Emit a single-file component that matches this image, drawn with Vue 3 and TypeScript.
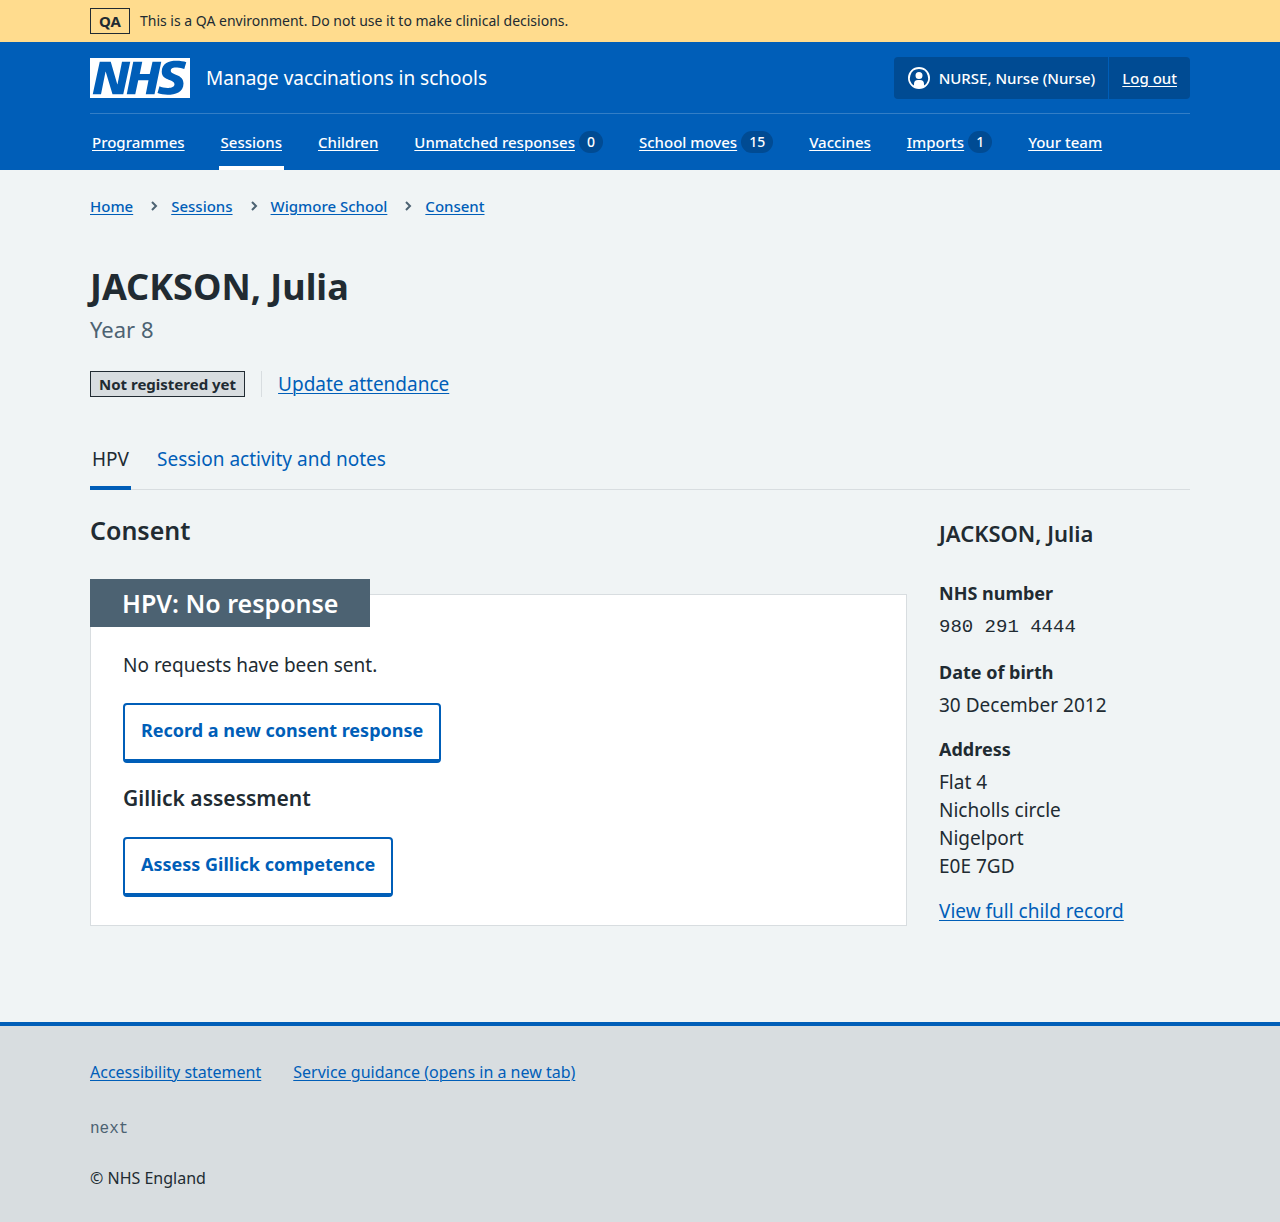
<script setup lang="ts">
interface NavItem {
  label: string
  count?: number
  current?: boolean
}

const navItems: NavItem[] = [
  { label: 'Programmes' },
  { label: 'Sessions', current: true },
  { label: 'Children' },
  { label: 'Unmatched responses', count: 0 },
  { label: 'School moves', count: 15 },
  { label: 'Vaccines' },
  { label: 'Imports', count: 1 },
  { label: 'Your team' },
]

const breadcrumbs: string[] = ['Home', 'Sessions', 'Wigmore School', 'Consent']

const address: string[] = ['Flat 4', 'Nicholls circle', 'Nigelport', 'E0E 7GD']
</script>

<template>
  <div class="page">
    <div class="environment">
      <div class="container environment-inner">
        <strong class="tag">QA</strong>
        <span class="environment-text">This is a QA environment. Do not use it to make clinical decisions.</span>
      </div>
    </div>

    <header class="header">
      <div class="container">
        <div class="header-top">
          <a class="service" href="#">
            <svg class="logo" viewBox="0 0 200 80" role="img" aria-label="NHS">
              <path
                fill="#fff"
                d="M200 0v80H0V0h200Zm-27.5 5.5c-14.5 0-29 5-29 22 0 10.2 7.7 13.5 14.7 16.3l.7.3c5.4 2 10.1 3.9 10.1 8.4 0 6.5-8.5 7.5-14 7.5s-12.5-1.5-16-3.5L135 70c5.5 2 13.5 3.5 20 3.5 15.5 0 32-4.5 32-22.5 0-19.5-25.5-16.5-25.5-25.5 0-5.5 5.5-6.5 12.5-6.5a35 35 0 0 1 14.5 3l4-13.5c-4.5-2-12-3-20-3Zm-131 2h-22l-14 65H22l9-45h.5l13.5 45h21.5l14-65H64l-9 45h-.5l-13-45Zm63 0h-18l-13 65h17l6-28H117l-5.5 28H129l13.5-65H125L119.5 32h-20l5-24.5Z"
              />
            </svg>
            <span>Manage vaccinations in schools</span>
          </a>
          <div class="account">
            <div class="account-item">
              <svg class="account-icon" viewBox="0 0 24 24" aria-hidden="true">
                <path
                  fill="#fff"
                  d="M12 1a11 11 0 1 1 0 22 11 11 0 0 1 0-22Zm0 2a9 9 0 0 0-5 16.5V18a4 4 0 0 1 4-4h2a4 4 0 0 1 4 4v1.5A9 9 0 0 0 12 3Zm0 3a3.5 3.5 0 1 1 0 7 3.5 3.5 0 0 1 0-7Z"
                />
              </svg>
              <span>NURSE, Nurse (Nurse)</span>
            </div>
            <div class="account-item">
              <a href="#">Log out</a>
            </div>
          </div>
        </div>
        <nav class="nav" aria-label="Menu">
          <a
            v-for="item in navItems"
            :key="item.label"
            class="nav-link"
            :class="{ 'nav-link-current': item.current }"
            :aria-current="item.current ? 'true' : undefined"
            href="#"
          >
            <span class="nav-label">{{ item.label }}</span>
            <span v-if="item.count !== undefined" class="count">{{ item.count }}</span>
          </a>
        </nav>
      </div>
    </header>

    <div class="container content">
      <nav aria-label="Breadcrumb">
        <ol class="breadcrumb">
          <li v-for="(crumb, index) in breadcrumbs" :key="crumb">
            <svg v-if="index > 0" class="chevron" viewBox="0 0 8 12" aria-hidden="true">
              <path d="M2 2l4 4-4 4" fill="none" stroke="#4c6272" stroke-width="2" />
            </svg>
            <a href="#">{{ crumb }}</a>
          </li>
        </ol>
      </nav>

      <main>
        <h1 class="title">JACKSON, Julia</h1>
        <p class="caption">Year 8</p>

        <div class="status">
          <strong class="tag tag-grey">Not registered yet</strong>
          <div class="status-action">
            <a href="#">Update attendance</a>
          </div>
        </div>

        <nav class="tabs" aria-label="Session">
          <a class="tab tab-current" href="#" aria-current="page">HPV</a>
          <a class="tab" href="#">Session activity and notes</a>
        </nav>

        <div class="columns">
          <section class="primary">
            <h2 class="section-title">Consent</h2>
            <div class="card">
              <h3 class="card-title">HPV: No response</h3>
              <p class="card-text">No requests have been sent.</p>
              <button class="button" type="button">Record a new consent response</button>
              <h4 class="card-subtitle">Gillick assessment</h4>
              <button class="button" type="button">Assess Gillick competence</button>
            </div>
          </section>

          <aside class="secondary">
            <h2 class="child-name">JACKSON, Julia</h2>
            <dl class="details">
              <dt>NHS number</dt>
              <dd class="mono">980 291 4444</dd>
              <dt>Date of birth</dt>
              <dd>30 December 2012</dd>
              <dt>Address</dt>
              <dd>
                <div v-for="line in address" :key="line">{{ line }}</div>
              </dd>
            </dl>
            <a href="#">View full child record</a>
          </aside>
        </div>
      </main>
    </div>

    <footer class="footer">
      <div class="container">
        <ul class="footer-links">
          <li><a href="#">Accessibility statement</a></li>
          <li><a href="#">Service guidance (opens in a new tab)</a></li>
        </ul>
        <p class="version">next</p>
        <p class="copyright">© NHS England</p>
      </div>
    </footer>
  </div>
</template>

<style>
body {
  margin: 0;
  background: #d8dde0;
}
</style>

<style scoped>
.page {
  background: #f0f4f5;
  color: #212b32;
  font-family: "Noto Sans", "Open Sans", sans-serif;
  font-size: 19px;
  line-height: 28px;
}

.page * {
  box-sizing: border-box;
}

h1,
h2,
h3,
h4,
p,
ol,
ul,
dl,
dd {
  margin: 0;
  padding: 0;
}

ol,
ul {
  list-style: none;
}

h1,
h2,
h3,
h4 {
  font-weight: 600;
}

a {
  color: #005eb8;
  text-underline-offset: 2px;
  text-decoration-thickness: 1px;
}

.container {
  max-width: 1100px;
  margin: 0 auto;
}

.environment {
  padding: 8px 0;
  background: #ffdc8e;
}

.environment-inner {
  display: flex;
  align-items: center;
  gap: 10px;
}

.environment-text {
  font-size: 14px;
  line-height: 24px;
}

.tag {
  padding: 0 8px;
  border: 1px solid #212b32;
  font-size: 15px;
  font-weight: 700;
  line-height: 24px;
}

.tag-grey {
  background: #d8dde0;
}

.header {
  background: #005eb8;
  color: #fff;
}

.header a {
  color: #fff;
}

.header-top {
  display: flex;
  align-items: center;
  justify-content: space-between;
  padding: 15px 0 14px;
  border-bottom: 1px solid #337ec6;
}

.service {
  display: flex;
  align-items: center;
  gap: 16px;
  text-decoration: none;
}

.logo {
  width: 100px;
  height: 40px;
}

.account {
  display: flex;
  border-radius: 4px;
  background: #004b93;
  font-size: 15px;
  font-weight: 500;
  line-height: 24px;
}

.account-item {
  display: flex;
  align-items: center;
  gap: 8px;
  padding: 9px 13px;
}

.account-item + .account-item {
  border-left: 1px solid #005eb8;
}

.account-icon {
  width: 24px;
  height: 24px;
}

.nav {
  display: flex;
  gap: 32px;
  font-size: 15px;
  font-weight: 500;
  line-height: 24px;
}

.nav-link {
  display: flex;
  align-items: center;
  gap: 4px;
  padding: 16px 2px 12px;
  border-bottom: 4px solid transparent;
  text-decoration: none;
}

.nav-link-current {
  border-bottom-color: #fff;
}

.nav-label {
  text-decoration: underline;
}

.count {
  padding: 0 8px;
  border-radius: 12px;
  background: #004b93;
  font-size: 14px;
  line-height: 22px;
}

.content {
  padding: 24px 0 96px;
}

.breadcrumb {
  display: flex;
  gap: 17px;
  font-size: 15px;
  font-weight: 500;
  line-height: 24px;
}

.breadcrumb li {
  display: flex;
  align-items: center;
  gap: 13px;
}

.chevron {
  width: 8px;
  height: 12px;
}

.title {
  margin-top: 44px;
  font-size: 36px;
  font-weight: 700;
  line-height: 50px;
}

.caption {
  color: #4c6272;
  font-size: 22px;
  line-height: 34px;
}

.status {
  display: flex;
  align-items: center;
  gap: 16px;
  margin-top: 25px;
}

.status-action {
  padding-left: 16px;
  border-left: 1px solid #d8dde0;
  line-height: 26px;
}

.tabs {
  display: flex;
  gap: 24px;
  margin-top: 48px;
  box-shadow: inset 0 -1px #d8dde0;
}

.tab {
  padding: 0 2px 13px;
  border-bottom: 4px solid transparent;
  text-decoration: none;
}

.tab-current {
  border-bottom-color: #005eb8;
  color: #212b32;
}

.columns {
  display: grid;
  grid-template-columns: 817fr 251fr;
  gap: 32px;
  padding-top: 24px;
}

.section-title {
  font-size: 25px;
  line-height: 32px;
}

.card {
  margin-top: 48px;
  padding: 0 32px 28px;
  border: 1px solid #d8dde0;
  background: #fff;
}

.card-title {
  width: fit-content;
  margin: -16px 0 24px -33px;
  padding: 8px 32px;
  background: #4c6272;
  color: #fff;
  font-size: 25px;
  line-height: 32px;
}

.card-text {
  margin-bottom: 24px;
}

.button {
  display: block;
  padding: 11px 16px 15px;
  border: 2px solid #005eb8;
  border-bottom-width: 4px;
  border-radius: 4px;
  background: #fff;
  color: #005eb8;
  font-family: inherit;
  font-size: 18px;
  font-weight: 700;
  line-height: 28px;
}

.card-subtitle {
  margin: 20px 0 24px;
  font-size: 21px;
  line-height: 30px;
}

.child-name {
  margin: 4px 0 32px;
  font-size: 22px;
  line-height: 30px;
}

.details dt {
  font-size: 18px;
  font-weight: 700;
  line-height: 26px;
}

.details dd {
  margin: 6px 0 17px;
}

.details .mono {
  margin: 7px 0 18px;
  font-family: "Liberation Mono", monospace;
}

.footer {
  padding: 34px 0 32px;
  border-top: 4px solid #005eb8;
  background: #d8dde0;
  font-size: 16px;
  line-height: 24px;
}

.footer-links {
  display: flex;
  gap: 32px;
}

.version {
  margin-top: 33px;
  color: #4c6272;
  font-family: "Liberation Mono", monospace;
}

.copyright {
  margin-top: 25px;
}
</style>
